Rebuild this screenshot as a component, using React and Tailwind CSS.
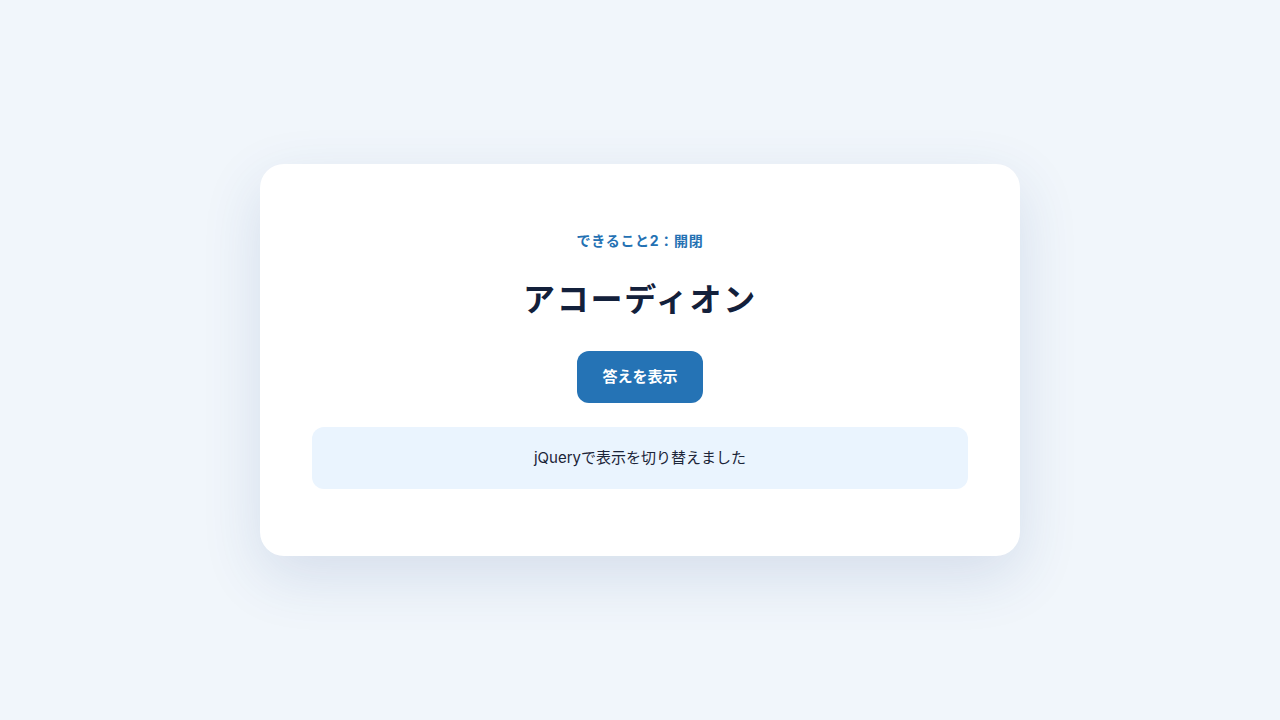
import React, { useState } from 'react';

const App = () => {
  const [open, setOpen] = useState(true);

  return (
    <div
      className="min-h-screen w-full bg-[#f1f6fb] flex items-center justify-center"
      style={{ fontFamily: 'Inter, "Noto Sans CJK JP", sans-serif' }}
    >
      <div className="w-[760px] bg-white rounded-[24px] shadow-[0_20px_60px_rgba(40,80,140,0.14)] px-[52px] pt-[67px] pb-[67px] flex flex-col items-center">
        {/* Label */}
        <p className="text-[14px] leading-[20px] font-bold tracking-[0.05em] text-[#2471b3]">
          できること2：開閉
        </p>

        {/* Title */}
        <h1 className="mt-[28px] text-[32px] leading-[42px] font-bold tracking-[0.055em] text-[#13203b]">
          アコーディオン
        </h1>

        <button
          onClick={() => setOpen(!open)}
          className="mt-[30px] h-[52px] px-[25px] rounded-[12px] bg-[#2573b5] text-white text-[15px] font-bold"
        >
          答えを表示
        </button>

        {open && (
          <div className="mt-[24px] w-full h-[62px] rounded-[12px] bg-[#eaf4fe] flex items-center justify-center text-[15px] text-[#1b2438]">
            jQueryで表示を切り替えました
          </div>
        )}
      </div>
    </div>
  );
};

export default App;
